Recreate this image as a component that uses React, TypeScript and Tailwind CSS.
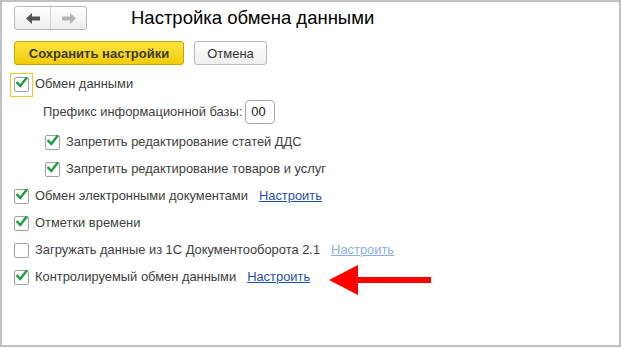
import type { ReactElement, ReactNode } from "react";

const font = { fontFamily: '"Liberation Sans", Arial, sans-serif' };

function Check({ checked }: { checked: boolean }): ReactElement {
	return (
		<span className="flex h-[15px] w-[15px] shrink-0 items-center justify-center rounded-[2px] border border-[#a0a0a0] bg-white">
			{checked && (
				<svg width="14" height="13" viewBox="0 0 14 13" className="-mt-[4px] ml-[1px]">
					<path d="M1.5 7 L5 10.5 L12 1.5" fill="none" stroke="#1a9f3f" strokeWidth="2.8" strokeLinecap="square" />
				</svg>
			)}
		</span>
	);
}

function Link({ children, faded }: { children: ReactNode; faded?: boolean }): ReactElement {
	return (
		<span className={faded ? "text-[#8aaee6] underline" : "text-[#1f4fae] underline"}>{children}</span>
	);
}

function Row({
	indent,
	checked,
	label,
	link,
	faded,
	children,
}: {
	indent?: boolean;
	checked: boolean;
	label: string;
	link?: boolean;
	faded?: boolean;
	children?: ReactNode;
}): ReactElement {
	return (
		<div className={`flex h-[27px] items-center ${indent ? "pl-[43px]" : "pl-3"}`}>
			<Check checked={checked} />
			<span className="ml-[6px] text-[#404040]">{label}</span>
			{link && (
				<span className="ml-[11px]">
					<Link faded={faded}>Настроить</Link>
				</span>
			)}
			{children}
		</div>
	);
}

function NavArrow({ dir, color }: { dir: "left" | "right"; color: string }): ReactElement {
	return (
		<svg width="14" height="11" viewBox="0 0 14 11" className={dir === "right" ? "rotate-180" : ""}>
			<path d="M0 5.5 L6 0 L6 3.5 L14 3.5 L14 7.5 L6 7.5 L6 11 Z" fill={color} />
		</svg>
	);
}

export default function App(): ReactElement {
	return (
		<div className="h-[347px] w-[621px] border-2 border-[#c0c0c0] bg-white text-[12.9px] leading-none" style={font}>
			<div className="flex items-center pl-3 pt-1">
				<div className="flex h-6 w-[73px] overflow-hidden rounded-[3px] border border-[#b8b8b8] bg-gradient-to-b from-white to-[#ededed]">
					<div className="flex flex-1 items-center justify-center border-r border-[#d0d0d0]">
						<NavArrow dir="left" color="#555555" />
					</div>
					<div className="flex flex-1 items-center justify-center">
						<NavArrow dir="right" color="#b4b4b4" />
					</div>
				</div>
				<h1 className="ml-[44px] text-[18.5px] text-black">Настройка обмена данными</h1>
			</div>

			<div className="mt-[11px] flex gap-[10px] pl-3">
				<button className="h-6 w-[170px] rounded-[3px] border border-[#c9a600] bg-gradient-to-b from-[#ffe53b] to-[#f1cb00] text-[13px] font-bold text-[#3d3a26]">
					Сохранить настройки
				</button>
				<button className="h-6 w-[73px] rounded-[3px] border border-[#b8b8b8] bg-gradient-to-b from-white to-[#eeeeee] text-[13px] text-[#333333]">
					Отмена
				</button>
			</div>

			<div className="mt-[6px] flex h-[27px] items-center pl-2">
				<span className="flex h-[24px] w-[23px] items-center justify-center border border-[#f3c623]">
					<Check checked />
				</span>
				<span className="ml-[2px] text-[#404040]">Обмен данными</span>
			</div>

			<div className="flex h-[28px] items-center pl-[41px]">
				<span className="text-[#404040]">Префикс информационной базы:</span>
				<span className="ml-[3px] flex h-6 w-[30px] items-center rounded-[4px] border border-[#a8a8a8] pl-[5px] text-[#222222]">
					00
				</span>
			</div>

			<div className="mt-[3px]">
				<Row indent checked label="Запретить редактирование статей ДДС" />
				<Row indent checked label="Запретить редактирование товаров и услуг" />
				<Row checked label="Обмен электронными документами" link />
				<Row checked label="Отметки времени" />
				<Row checked={false} label="Загружать данные из 1С Документооборота 2.1" link faded />
				<Row checked label="Контролируемый обмен данными" link>
					<svg width="102" height="31" viewBox="0 0 102 31" className="ml-[19px] translate-y-[3px]">
						<path d="M0 15 L29 0 L29 12 L102 12 L102 18 L29 18 L29 30 Z" fill="#ff0000" />
					</svg>
				</Row>
			</div>
		</div>
	);
}
